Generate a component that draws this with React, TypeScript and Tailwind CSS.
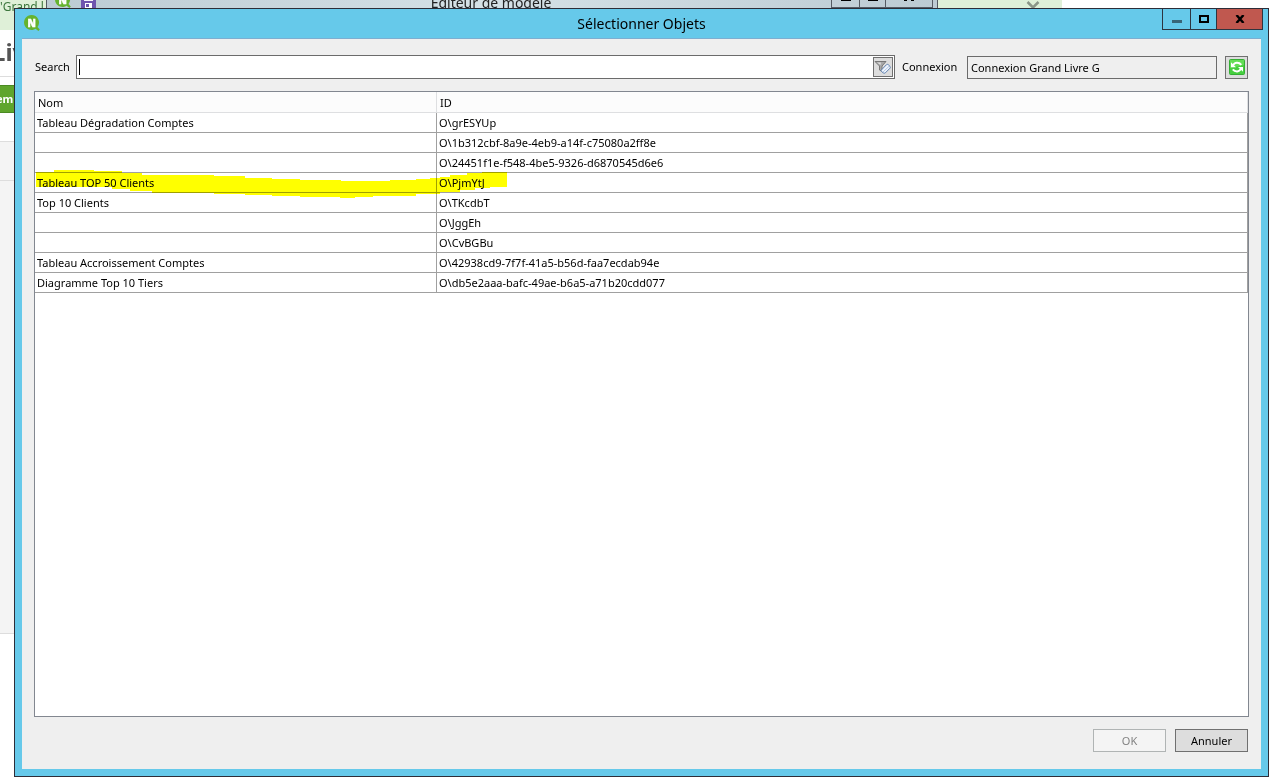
import { useState } from "react";

interface ObjectRow {
    nom: string;
    id: string;
}

const rows: ObjectRow[] = [
    { nom: "Tableau Dégradation Comptes", id: "O\\grESYUp" },
    { nom: "", id: "O\\1b312cbf-8a9e-4eb9-a14f-c75080a2ff8e" },
    { nom: "", id: "O\\24451f1e-f548-4be5-9326-d6870545d6e6" },
    { nom: "Tableau TOP 50 Clients", id: "O\\PjmYtJ" },
    { nom: "Top 10 Clients", id: "O\\TKcdbT" },
    { nom: "", id: "O\\JggEh" },
    { nom: "", id: "O\\CvBGBu" },
    { nom: "Tableau Accroissement Comptes", id: "O\\42938cd9-7f7f-41a5-b56d-faa7ecdab94e" },
    { nom: "Diagramme Top 10 Tiers", id: "O\\db5e2aaa-bafc-49ae-b6a5-a71b20cdd077" },
];

function AppLogo() {
    return (
        <svg width="16" height="16" viewBox="0 0 16 16" aria-hidden="true">
            <path d="M7.5 0A7.5 7.5 0 1 0 11.6 13.8L14.4 16 15.8 14.4 13.5 12A7.5 7.5 0 0 0 7.5 0Z" fill="#65b32e" />
            <text x="7.7" y="11.5" textAnchor="middle" fontSize="10" fontWeight="900" fill="#fff" stroke="#fff" strokeWidth="0.5">N</text>
        </svg>
    );
}

function SaveIcon() {
    return (
        <svg width="15" height="16" viewBox="0 0 15 16" aria-hidden="true">
            <path d="M0 0H15V16H0Z" fill="#6f55ae" />
            <path d="M3 0H12V9H3Z" fill="#f4f2fa" />
            <path d="M4 2.5H11M4 5.5H11" stroke="#9a8bc4" />
            <path d="M4 11H11V16H4Z" fill="#fff" />
            <path d="M5 12H8V15H5Z" fill="#6f55ae" />
        </svg>
    );
}

function ClearFilterIcon() {
    return (
        <svg width="18" height="16" viewBox="0 0 18 16" aria-hidden="true">
            <path d="M1 2.5H12L8 7V12.5L5.5 11V7Z" fill="#a9a9a9" stroke="#777" />
            <path d="M3 3.5H7L6.5 6Z" fill="#dedede" />
            <path d="M7.2 11.2 12.6 5.6Q13.5 5 14.4 5.8L16 7.4Q16.7 8.4 16 9.2L11.4 13.8Q10.4 14.6 9.3 13.9L7.5 12.5Q6.8 11.9 7.2 11.2Z" fill="#eef4fc" stroke="#5d7fae" />
            <path d="M9 13 15.2 7.2" stroke="#b4c8e6" />
        </svg>
    );
}

function RefreshIcon() {
    return (
        <svg width="16" height="16" viewBox="0 0 16 16" aria-hidden="true">
            <rect x="0.5" y="0.5" width="15" height="15" rx="1" fill="#46cf3f" stroke="#35ad34" />
            <path d="M1 1H15V6L1 9Z" fill="#63dd55" />
            <path d="M12.3 5.8Q10.6 3.6 7.8 3.7 5.2 3.8 4 6.4" fill="none" stroke="#fff" strokeWidth="2" />
            <path d="M2 3.3V8.2H7Z" fill="#fff" />
            <path d="M3.8 10.4Q5.4 12.5 8.2 12.4 10.9 12.2 12 9.7" fill="none" stroke="#fff" strokeWidth="2" />
            <path d="M14 12.8V7.9H9Z" fill="#fff" />
        </svg>
    );
}

function Backdrop() {
    return (
        <div className="absolute inset-0 flex flex-col overflow-hidden">
            <div className="flex h-[30px] items-start">
                <div className="h-full w-[46px] shrink-0 overflow-hidden bg-[#dff0d8] text-xs leading-[14px] whitespace-nowrap text-[#3c763d]">'Grand l</div>
                <div className="flex h-full flex-1 items-start border-x border-[#555b63] bg-linear-to-r from-[#bccbd3] via-[#d5e1e6] to-[#bccbd3]">
                    <div className="-mt-2 flex w-[200px] gap-2.5 pl-2">
                        <AppLogo />
                        <SaveIcon />
                    </div>
                    <p className="-mt-2 flex-1 pr-24 text-center text-sm leading-[21px] text-[#222]">Editeur de modèle</p>
                    <div className="mr-1 flex h-2 border-x border-b border-[#555b63]">
                        <span className="flex w-7 justify-center border-r border-[#555b63]"><i className="h-px w-2.5 bg-black" /></span>
                        <span className="flex w-[26px] justify-center border-r border-[#555b63]"><i className="h-px w-2.5 bg-black" /></span>
                        <span className="flex w-[46px] justify-center gap-1"><i className="h-px w-[3px] bg-black" /><i className="h-px w-[3px] bg-black" /></span>
                    </div>
                </div>
                <div className="flex h-full w-[124px] justify-end bg-[#dff0d8] pr-[22px]">
                    <svg width="14" height="9" viewBox="0 0 14 9" aria-hidden="true">
                        <path d="M1.5 2 7 7.5 12.5 2" fill="none" stroke="#8b9688" strokeWidth="2.5" />
                    </svg>
                </div>
                <div className="w-[213px]" />
            </div>
            <div className="mr-2 flex flex-col">
                <div className="h-[47px] border-b border-[#ddd] pt-1.5 text-2xl font-bold text-[#555]">
                    <span className="-ml-2">Liv</span>
                </div>
                <div className="h-16 pt-2">
                    <div className="h-7 w-16 border-y border-[#4a8a22] bg-[#5fa52c] text-[11px] leading-[26px] font-bold text-white">
                        <span className="-ml-1">emb</span>
                    </div>
                </div>
                <div className="h-10 border-y border-[#ddd] bg-[#f4f4f4]" />
                <div className="h-[453px] border-b border-[#ddd] bg-[#f4f4f4]" />
            </div>
        </div>
    );
}

function TitleBar() {
    return (
        <header className="grid h-[29px] grid-cols-[1fr_auto_1fr] items-start">
            <div className="pt-1.5 pl-[9px]">
                <AppLogo />
            </div>
            <h1 className="pt-1 text-sm leading-[21px] text-black">Sélectionner Objets</h1>
            <div className="mr-[5px] flex h-[21px] justify-self-end border-x border-b border-[#2d3540]">
                <button aria-label="Réduire" className="flex w-7 items-end justify-center border-r border-[#2d3540] pb-1.5">
                    <i className="h-[3px] w-2.5 bg-[#386678]" />
                </button>
                <button aria-label="Agrandir" className="flex w-[26px] items-center justify-center border-r border-[#2d3540]">
                    <i className="h-2 w-2.5 border-2 border-black" />
                </button>
                <button aria-label="Fermer" className="flex w-[45px] items-center justify-center bg-[#c0584f]">
                    <svg width="10" height="8" viewBox="0 0 10 8" aria-hidden="true">
                        <path d="M1.5 0 8.5 8M8.5 0 1.5 8" stroke="#000" strokeWidth="2.4" />
                    </svg>
                </button>
            </div>
        </header>
    );
}

function ObjectTable() {
    return (
        <div className="relative flex-1 border border-[#828790] bg-white">
            <table className="w-full table-fixed border-separate border-spacing-0 text-left">
                <thead>
                    <tr className="h-[21px] bg-[#fcfcfc]">
                        <th className="w-[402px] border-r border-b border-[#dedfe1] px-[3px] pt-0.5 font-normal">Nom</th>
                        <th className="border-r border-b border-[#dedfe1] px-[3px] pt-0.5 font-normal">ID</th>
                    </tr>
                </thead>
                <tbody>
                    {rows.map((row) => (
                        <tr key={row.id} className="h-5">
                            <td className="border-r border-b border-[#a0a0a0] px-0.5">{row.nom}</td>
                            <td className="border-r border-b border-[#a0a0a0] px-0.5">{row.id}</td>
                        </tr>
                    ))}
                </tbody>
            </table>
            {/* marker stroke over the TOP 50 row */}
            <svg className="pointer-events-none absolute top-[76px] left-0 mix-blend-multiply" width="474" height="32" viewBox="35 168 474 32" aria-hidden="true">
                <path
                    d="M36 172H54V170H94V171H122V173H142V175H214V176H245V178H272V179H300V180H341V181H390V180H416V179H430V178H440V177H450V175H467V173H482V172H507V187H490V188H475V190H460V192H440V194H416V196H373V197H355V198H340V197H300V196H272V195H245V194H214V193H152V191H130V189H112V187H36Z"
                    fill="#ffff00"
                />
            </svg>
        </div>
    );
}

export default function App() {
    const [search, setSearch] = useState("");

    return (
        <div className="relative min-h-screen overflow-hidden bg-white font-['Noto_Sans','Open_Sans',sans-serif]">
            <Backdrop />
            <main className="absolute top-2 right-1.5 bottom-[7px] left-3.5 flex flex-col border border-[#2d2d38] bg-[#66c9ea]">
                <TitleBar />
                <div className="mx-[7px] mb-[7px] flex flex-1 flex-col border-t border-[#7eaed0] bg-[#efefef] px-3 pt-4 pb-[17px] text-[11px] leading-4 text-black">
                    <div className="mb-3 flex items-center">
                        <label htmlFor="search" className="w-[42px] pl-px">Search</label>
                        <div className="flex h-6 flex-1 items-center border border-[#6b6b6b] bg-white pr-px">
                            <i className="ml-0.5 h-4 w-px bg-black" />
                            <input
                                id="search"
                                type="text"
                                value={search}
                                onChange={(e) => setSearch(e.target.value)}
                                className="h-full min-w-0 flex-1 outline-none"
                            />
                            <button aria-label="Effacer le filtre" className="flex h-5 w-5 items-center justify-center border border-[#707070] bg-[#dddddd]">
                                <ClearFilterIcon />
                            </button>
                        </div>
                        <label htmlFor="connexion" className="w-[72px] pl-[7px]">Connexion</label>
                        <input
                            id="connexion"
                            type="text"
                            readOnly
                            value="Connexion Grand Livre G"
                            className="h-[23px] w-[250px] border border-[#6b6b6b] bg-[#efefef] px-[3px] outline-none"
                        />
                        <button aria-label="Actualiser" className="mr-px ml-2 flex h-[23px] w-[23px] items-center justify-center border border-[#707070] bg-[#dddddd]">
                            <RefreshIcon />
                        </button>
                    </div>
                    <ObjectTable />
                    <div className="mt-3 flex justify-end gap-[9px] pr-px">
                        <button disabled className="h-[23px] w-[73px] border border-[#b0b4b4] bg-[#f4f4f4] text-[#838383]">OK</button>
                        <button className="h-[23px] w-[73px] border border-[#707070] bg-[#dddddd]">Annuler</button>
                    </div>
                </div>
            </main>
        </div>
    );
}
